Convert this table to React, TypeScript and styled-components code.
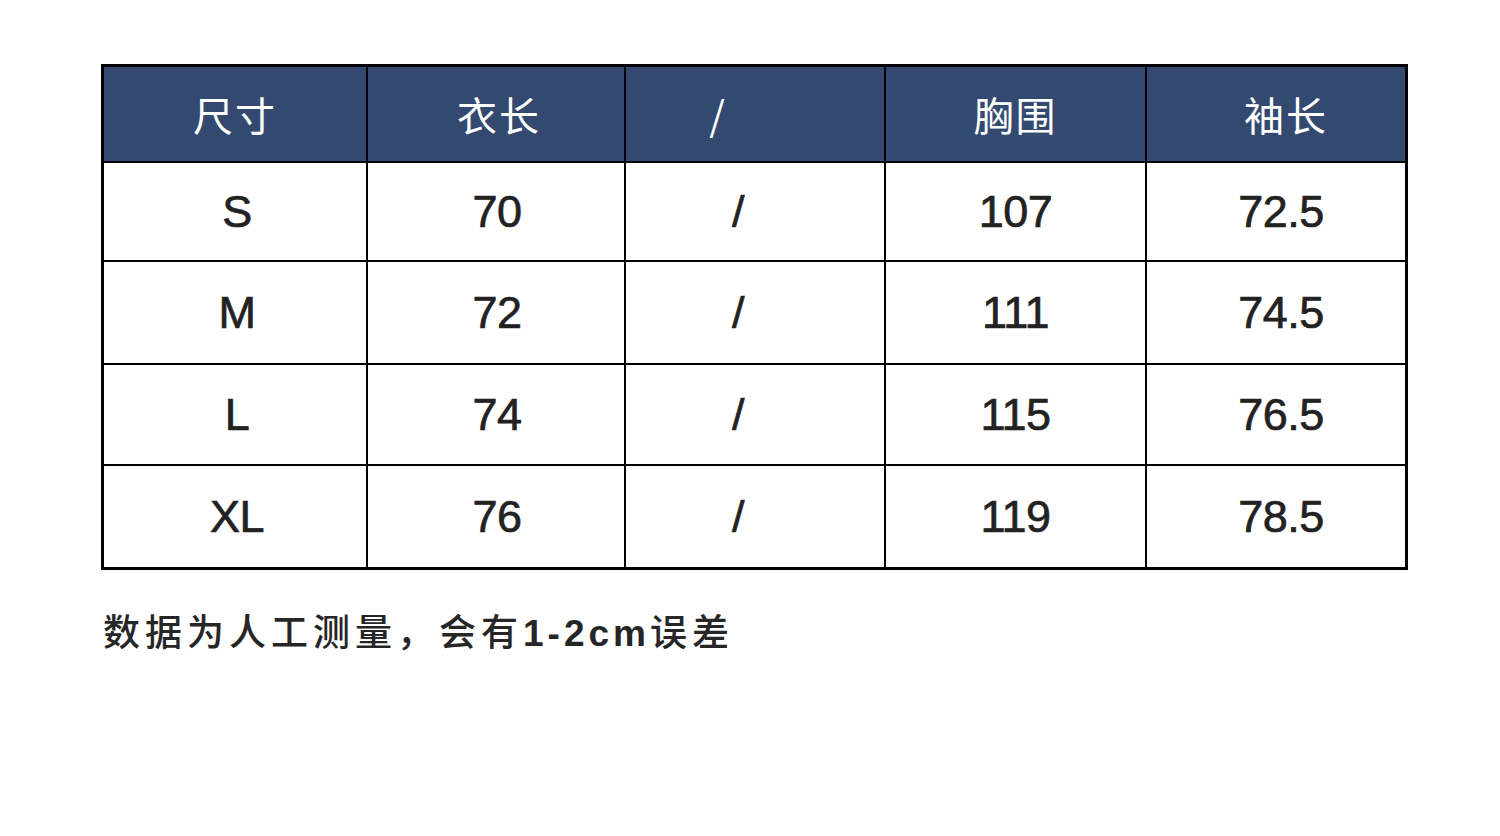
import React from 'react';
import styled, { createGlobalStyle } from 'styled-components';

const GlobalStyle = createGlobalStyle`
  html, body {
    margin: 0;
    padding: 0;
    background: #ffffff;
  }
`;

const Page = styled.div`
  width: 1500px;
  height: 836px;
  box-sizing: border-box;
  padding: 64px 0 0 101px;
  background: #ffffff;
`;

const Table = styled.div`
  display: grid;
  grid-template-columns: 262px 256px 258px 259px 258px;
  grid-template-rows: 94px 97px 101px 99px 101px;
  gap: 2px;
  width: max-content;
  border: 3px solid #000;
  background: #000;
`;

const HeadCell = styled.div<{ $shift?: number }>`
  display: flex;
  align-items: center;
  justify-content: center;
  background: #34496f;
  color: #ffffff;
  font-family: "Noto Sans CJK SC", sans-serif;
  font-size: 40px;
  font-weight: 400;
  letter-spacing: 2px;
  padding-left: ${p => (p.$shift && p.$shift > 0 ? p.$shift * 2 : 0)}px;
  padding-right: ${p => (p.$shift && p.$shift < 0 ? -p.$shift * 2 : 0)}px;
`;

const Cell = styled.div<{ $shift?: number }>`
  display: flex;
  align-items: center;
  justify-content: center;
  background: #ffffff;
  color: #222222;
  font-family: "Liberation Sans", Arial, sans-serif;
  font-size: 45px;
  letter-spacing: -0.5px;
  -webkit-text-stroke: 0.7px #222222;
  padding-left: ${p => (p.$shift && p.$shift > 0 ? p.$shift * 2 : 0)}px;
  padding-right: ${p => (p.$shift && p.$shift < 0 ? -p.$shift * 2 : 0)}px;
`;

const Note = styled.p`
  margin: 41px 0 0 2px;
  font-family: "Liberation Sans", "Noto Sans CJK SC", sans-serif;
  font-size: 37px;
  font-weight: 500;
  letter-spacing: 5px;
  line-height: 46px;
  color: #262626;
`;

const Latin = styled.span`
  font-weight: 700;
  letter-spacing: 4px;
`;

const headers = [
  { label: '尺寸', shift: 0 },
  { label: '衣长', shift: 3 },
  { label: '/', shift: -37 },
  { label: '胸围', shift: 0 },
  { label: '袖长', shift: 10 },
];

const shifts = [2, 1, -17, 0, 5];

const rows = [
  ['S', '70', '/', '107', '72.5'],
  ['M', '72', '/', '111', '74.5'],
  ['L', '74', '/', '115', '76.5'],
  ['XL', '76', '/', '119', '78.5'],
];

export default function App() {
  return (
    <Page>
      <GlobalStyle />
      <Table>
        {headers.map(h => (
          <HeadCell key={h.label} $shift={h.shift}>{h.label}</HeadCell>
        ))}
        {rows.map(row =>
          row.map((v, i) => (
            <Cell key={row[0] + i} $shift={shifts[i]}>{v}</Cell>
          ))
        )}
      </Table>
      <Note>
        数据为人工测量，会有<Latin>1-2cm</Latin>误差
      </Note>
    </Page>
  );
}
